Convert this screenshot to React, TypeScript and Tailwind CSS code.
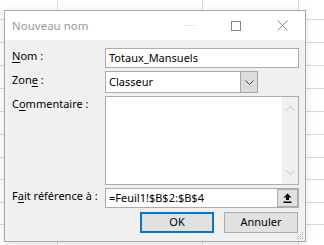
import type { ReactNode } from "react";

const rowLines = [19, 42, 65, 88, 111, 134, 157, 179, 202, 224];
const colLines = [57, 202, 298];

function Key({ children }: { children: ReactNode }) {
  return <span className="underline underline-offset-2">{children}</span>;
}

function Chevron({ up = false, color = "#444" }: { up?: boolean; color?: string }) {
  return (
    <svg width="9" height="5" viewBox="0 0 9 5" className={up ? "rotate-180" : ""}>
      <path d="M0.5 0.5 L4.5 4.5 L8.5 0.5" fill="none" stroke={color} strokeWidth="1" />
    </svg>
  );
}

export default function App() {
  return (
    <div className="relative w-[324px] h-[245px] overflow-hidden bg-white font-['Noto_Sans',sans-serif] text-[11px] text-black">
      {/* feuille de calcul derrière la boîte */}
      {rowLines.map((y) => (
        <div key={`r${y}`} className="absolute left-0 right-0 h-px bg-[#dadada]" style={{ top: y }} />
      ))}
      {colLines.map((x) => (
        <div key={`c${x}`} className="absolute top-0 bottom-0 w-px bg-[#dadada]" style={{ left: x }} />
      ))}

      <div className="absolute left-[4px] top-[10px] w-[302px] h-[232px] border border-[#a9a9a9] bg-[#f0f0f0] flex flex-col shadow-[0_2px_8px_rgba(0,0,0,0.12)]">
        {/* barre de titre */}
        <div className="h-[29px] bg-white flex items-center justify-between">
          <span className="pl-[7px] text-[11.5px] text-[#9a9a9a]">Nouveau nom</span>
          <div className="flex h-full">
            <div className="w-[46px] flex items-center justify-center">
              <div className="w-[10px] h-px bg-[#e4e4e4]" />
            </div>
            <div className="w-[46px] flex items-center justify-center">
              <div className="w-[10px] h-[10px] border border-[#8a8a8a]" />
            </div>
            <div className="w-[46px] flex items-center justify-center">
              <svg width="11" height="11" viewBox="0 0 11 11">
                <path d="M0.5 0.5 L10.5 10.5 M10.5 0.5 L0.5 10.5" stroke="#8a8a8a" strokeWidth="1" />
              </svg>
            </div>
          </div>
        </div>

        {/* contenu */}
        <div className="flex-1 flex flex-col pl-[7px] pr-[6px] pt-[8px]">
          <div className="flex">
            <label className="w-[93px] leading-[16px]">
              <Key>N</Key>om :
            </label>
            <div className="w-[194px] h-[20px] border border-[#acacac] bg-white flex items-center pl-[3px]">
              Totaux_Mansuels
            </div>
          </div>

          <div className="flex mt-[3px]">
            <label className="w-[93px] leading-[18px]">
              Zon<Key>e</Key> :
            </label>
            <div className="w-[153px] h-[22px] border border-[#acacac] bg-white flex">
              <div className="flex-1 flex items-center pl-[3px]">Classeur</div>
              <div className="w-[18px] -my-px -mr-px bg-[#dcdcdc] border border-[#a6a6a6] flex items-center justify-center">
                <Chevron />
              </div>
            </div>
          </div>

          <div className="flex mt-[3px]">
            <label className="w-[93px] leading-[14px] pt-[1px]">
              C<Key>o</Key>mmentaire :
            </label>
            <div className="w-[194px] h-[89px] border border-[#acacac] bg-white flex justify-end">
              <div className="w-[16px] bg-[#f0f0f0] flex flex-col justify-between items-center py-[9px]">
                <Chevron up color="#c2c2c2" />
                <Chevron color="#c2c2c2" />
              </div>
            </div>
          </div>

          <div className="flex mt-[3px]">
            <label className="w-[93px] leading-[16px]">
              F<Key>a</Key>it référence à :
            </label>
            <div className="w-[194px] h-[20px] border border-[#acacac] bg-white flex">
              <div className="flex-1 flex items-center pl-[3px]">=Feuil1!$B$2:$B$4</div>
              <div className="w-[21px] bg-[#e1e1e1] border border-[#adadad] flex items-center justify-center">
                <svg width="9" height="10" viewBox="0 0 9 10">
                  <path d="M4.5 0.5 L8.5 4.5 L6 4.5 L6 7 L3 7 L3 4.5 L0.5 4.5 Z" fill="#000" />
                  <rect x="0.5" y="8.5" width="8" height="1.5" fill="#000" />
                </svg>
              </div>
            </div>
          </div>

          <div className="flex justify-end gap-[10px] mt-[4px] mr-px">
            <button className="w-[74px] h-[21px] border-2 border-[#0078d7] bg-[#e1e1e1] flex items-center justify-center">
              OK
            </button>
            <button className="w-[74px] h-[21px] border border-[#adadad] bg-[#e1e1e1] flex items-center justify-center">
              Annuler
            </button>
          </div>
        </div>

        {/* poignée de redimensionnement */}
        <svg className="absolute right-[1px] bottom-[1px]" width="8" height="8" viewBox="0 0 8 8">
          <g fill="#b4b4b4">
            <rect x="6" y="0" width="1" height="1" />
            <rect x="4" y="2" width="1" height="1" />
            <rect x="6" y="2" width="1" height="1" />
            <rect x="2" y="4" width="1" height="1" />
            <rect x="4" y="4" width="1" height="1" />
            <rect x="6" y="4" width="1" height="1" />
            <rect x="0" y="6" width="1" height="1" />
            <rect x="2" y="6" width="1" height="1" />
            <rect x="4" y="6" width="1" height="1" />
            <rect x="6" y="6" width="1" height="1" />
          </g>
        </svg>
      </div>
    </div>
  );
}
